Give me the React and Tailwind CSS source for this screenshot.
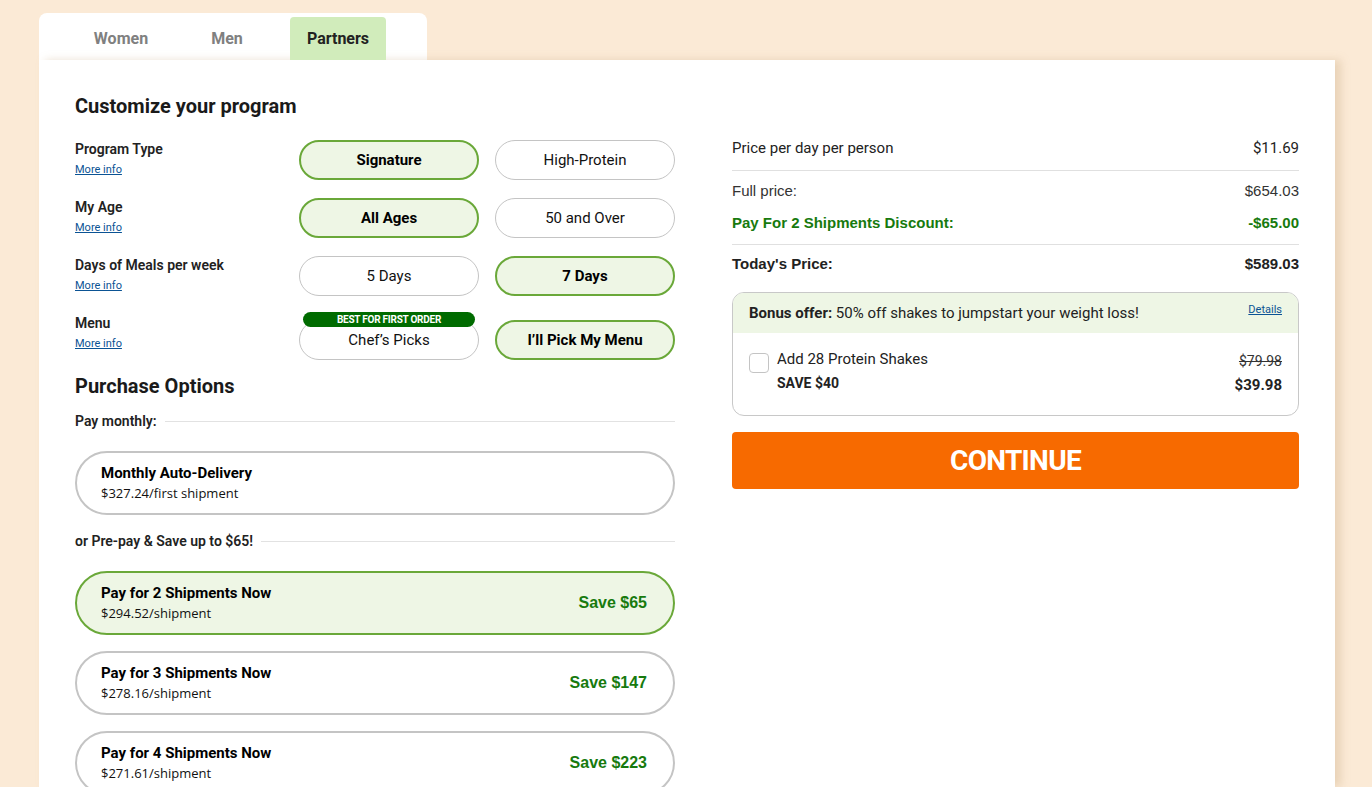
import React from 'react';

const font = { fontFamily: 'Roboto, "Liberation Sans", sans-serif' };
const arial = { fontFamily: '"Liberation Sans", Arial, sans-serif' };

const Option = ({ label, active, badge }) => (
  <div className="relative">
    {badge && (
      <div className="absolute left-[4px] right-[4px] top-[-8px] h-[15px] rounded-full bg-[#006b00] text-white text-[10px] font-bold leading-[15px] text-center uppercase tracking-tight">
        {badge}
      </div>
    )}
    <button
      className={`w-[180px] h-[40px] rounded-full text-[15px] ${
        active
          ? 'border-2 border-[#6aa839] bg-[#eef6e5] font-bold text-black'
          : 'border border-[#c4c4c4] bg-white text-[#111]'
      }`}
    >
      {label}
    </button>
  </div>
);

const rows = [
  { label: 'Program Type', options: ['Signature', 'High-Protein'], active: 0 },
  { label: 'My Age', options: ['All Ages', '50 and Over'], active: 0 },
  { label: 'Days of Meals per week', options: ['5 Days', '7 Days'], active: 1 },
  { label: 'Menu', options: ['Chef’s Picks', 'I’ll Pick My Menu'], active: 1, badge: 'Best for first order' },
];

const plans = [
  { title: 'Pay for 2 Shipments Now', price: '$294.52/shipment', save: 'Save $65', active: true },
  { title: 'Pay for 3 Shipments Now', price: '$278.16/shipment', save: 'Save $147' },
  { title: 'Pay for 4 Shipments Now', price: '$271.61/shipment', save: 'Save $223' },
];

const Divider = ({ text }) => (
  <div className="flex items-center gap-2 h-[20px]">
    <span className="text-[14px] font-semibold text-[#222]">{text}</span>
    <div className="flex-1 h-px bg-[#e2e2e2]" />
  </div>
);

const PlanCard = ({ title, price, save, active }) => (
  <div
    className={`h-[64px] shrink-0 rounded-full flex items-center justify-between pl-[24px] pr-[26px] border-2 ${
      active ? 'border-[#6aa839] bg-[#eef6e5]' : 'border-[#c4c4c4] bg-white'
    }`}
  >
    <div>
      <div className="text-[15px] font-bold text-black leading-[20px]">{title}</div>
      <div className="text-[13px] text-[#111] leading-[20px]" style={{ fontFamily: '"Open Sans", sans-serif' }}>{price}</div>
    </div>
    {save && <div className="text-[16px] font-bold text-[#177a0e]" style={arial}>{save}</div>}
  </div>
);

export default function App() {
  return (
    <div className="min-h-screen bg-[#fbead6] pt-[13px] pl-[39px] pr-[37px]" style={font}>
      <div className="flex w-[388px] h-[47px] bg-white rounded-t-lg items-end pl-[26px]">
        <div className="h-[43px] w-[112px] flex items-center justify-center text-[16px] font-bold text-[#808080]">Women</div>
        <div className="h-[43px] w-[100px] flex items-center justify-center text-[16px] font-bold text-[#808080]">Men</div>
        <div className="h-[43px] w-[96px] ml-[13px] flex items-center justify-center text-[16px] font-bold text-[#222] bg-[#d1ecbb] rounded-t">Partners</div>
      </div>
      <div className="bg-white shadow-[6px_0_8px_rgba(200,170,130,0.35)] flex gap-[57px] pl-[36px] pr-[36px] pt-[32px] h-[727px] overflow-hidden">
        <div className="w-[600px] shrink-0">
          <h2 className="text-[20px] font-bold text-[#1a1a1a] leading-[28px]">Customize your program</h2>
          <div className="mt-[20px] flex flex-col gap-[18px]">
            {rows.map((r, i) => (
              <div key={r.label} className="flex items-start justify-between h-[40px]">
                <div>
                  <div className="text-[14px] font-semibold text-[#222] leading-[18px]">{r.label}</div>
                  <a className="block mt-[4px] text-[11px] text-[#0b5394] underline leading-[16px]">More info</a>
                </div>
                <div className={`flex gap-[16px] ${i === 3 ? 'mt-[6px]' : ''}`}>
                  {r.options.map((o, j) => (
                    <Option key={o} label={o} active={j === r.active} badge={j === 0 ? r.badge : null} />
                  ))}
                </div>
              </div>
            ))}
          </div>
          <h2 className="mt-[18px] text-[20px] font-bold text-[#1a1a1a] leading-[28px]">Purchase Options</h2>
          <div className="mt-[11px]">
            <Divider text="Pay monthly:" />
          </div>
          <div className="mt-[20px]">
            <PlanCard title="Monthly Auto-Delivery" price="$327.24/first shipment" />
          </div>
          <div className="mt-[16px]">
            <Divider text="or Pre-pay & Save up to $65!" />
          </div>
          <div className="mt-[20px] flex flex-col gap-[16px]">
            {plans.map((p) => (
              <PlanCard key={p.title} {...p} />
            ))}
          </div>
        </div>
        <div className="w-[567px] shrink-0 pt-[46px]">
          <div className="flex justify-between text-[15px] leading-[20px] text-[#222] pb-[12px] border-b border-[#e0e0e0]">
            <span>Price per day per person</span>
            <span>$11.69</span>
          </div>
          <div style={arial}>
            <div className="flex justify-between text-[15px] leading-[20px] text-[#333] pt-[10px]">
              <span>Full price:</span>
              <span>$654.03</span>
            </div>
            <div className="flex justify-between text-[15px] leading-[20px] font-bold text-[#177a0e] pt-[12px] pb-[11px] border-b border-[#e0e0e0]">
              <span>Pay For 2 Shipments Discount:</span>
              <span>-$65.00</span>
            </div>
            <div className="flex justify-between text-[15px] leading-[20px] font-bold text-[#222] pt-[9px]">
              <span>Today's Price:</span>
              <span>$589.03</span>
            </div>
          </div>
          <div className="mt-[18px] border border-[#c8c8c8] rounded-xl overflow-hidden">
            <div className="bg-[#eef6e5] h-[40px] px-[16px] flex items-center justify-between text-[15px] text-[#222]">
              <span>
                <span className="font-bold">Bonus offer:</span> 50% off shakes to jumpstart your weight loss!
              </span>
              <a className="text-[11px] text-[#0b5394] underline self-start mt-[9px]">Details</a>
            </div>
            <div className="h-[82px] px-[16px] pt-[16px] flex justify-between">
              <div className="flex gap-[8px]">
                <div className="w-[20px] h-[20px] mt-[4px] border border-[#c4c4c4] rounded" />
                <div>
                  <div className="text-[15px] text-[#222] leading-[20px]">Add 28 Protein Shakes</div>
                  <div className="text-[14px] font-bold text-[#222] leading-[20px] mt-[4px]">SAVE $40</div>
                </div>
              </div>
              <div className="text-right">
                <div className="text-[14px] text-[#333] line-through leading-[20px] mt-[2px]">$79.98</div>
                <div className="text-[15px] font-bold text-[#222] leading-[20px] mt-[4px]">$39.98</div>
              </div>
            </div>
          </div>
          <button className="mt-[16px] w-full h-[57px] rounded bg-[#f76a00] text-white text-[28px] font-bold tracking-tight">
            CONTINUE
          </button>
        </div>
      </div>
    </div>
  );
}
